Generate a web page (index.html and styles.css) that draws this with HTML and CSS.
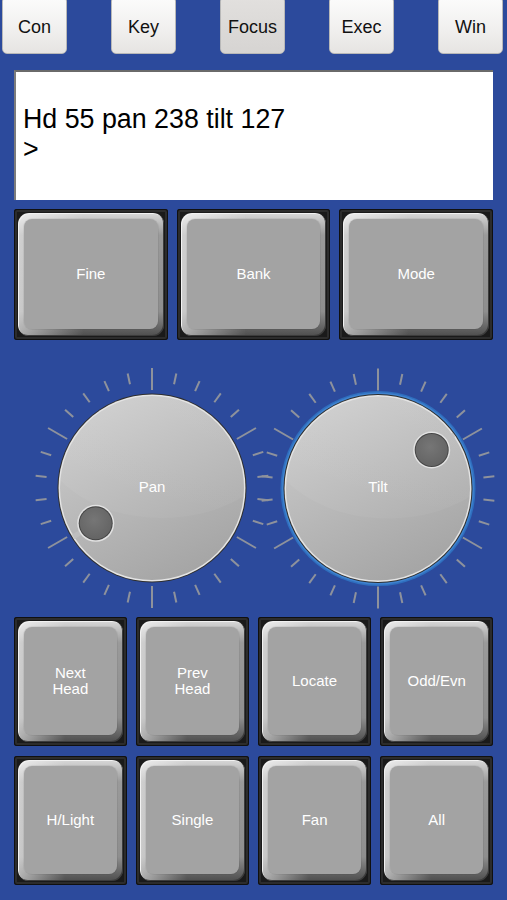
FILE: index.html
```html
<!DOCTYPE html>
<html>
<head>
<meta charset="utf-8">
<title>Focus</title>
<link rel="stylesheet" href="styles.css">
</head>
<body>
<div class="app">
  <nav class="tabs">
    <div class="tab">Con</div>
    <div class="tab">Key</div>
    <div class="tab tab-active">Focus</div>
    <div class="tab">Exec</div>
    <div class="tab">Win</div>
  </nav>

  <div class="display">
    <div class="display-line">Hd 55 pan 238 tilt 127</div>
    <div class="display-line">&gt;</div>
  </div>

  <div class="pads pads-3">
    <div class="pad"><div class="bevel"><div class="face">Fine</div></div></div>
    <div class="pad"><div class="bevel"><div class="face">Bank</div></div></div>
    <div class="pad"><div class="bevel"><div class="face">Mode</div></div></div>
  </div>

  <div class="knobs">
    <svg class="knob-canvas" width="507" height="277" viewBox="0 0 507 277">
      <defs>
        <g id="scale" stroke="#8e929c" stroke-width="2" stroke-linecap="butt">
          <line x1="0" y1="-98" x2="0" y2="-120" transform="rotate(0)"/>
          <line x1="0" y1="-106" x2="0" y2="-117" transform="rotate(12)"/>
          <line x1="0" y1="-106" x2="0" y2="-117" transform="rotate(24)"/>
          <line x1="0" y1="-106" x2="0" y2="-117" transform="rotate(36)"/>
          <line x1="0" y1="-106" x2="0" y2="-117" transform="rotate(48)"/>
          <line x1="0" y1="-98" x2="0" y2="-120" transform="rotate(60)"/>
          <line x1="0" y1="-106" x2="0" y2="-117" transform="rotate(72)"/>
          <line x1="0" y1="-106" x2="0" y2="-117" transform="rotate(84)"/>
          <line x1="0" y1="-106" x2="0" y2="-117" transform="rotate(96)"/>
          <line x1="0" y1="-106" x2="0" y2="-117" transform="rotate(108)"/>
          <line x1="0" y1="-98" x2="0" y2="-120" transform="rotate(120)"/>
          <line x1="0" y1="-106" x2="0" y2="-117" transform="rotate(132)"/>
          <line x1="0" y1="-106" x2="0" y2="-117" transform="rotate(144)"/>
          <line x1="0" y1="-106" x2="0" y2="-117" transform="rotate(156)"/>
          <line x1="0" y1="-106" x2="0" y2="-117" transform="rotate(168)"/>
          <line x1="0" y1="-98" x2="0" y2="-120" transform="rotate(180)"/>
          <line x1="0" y1="-106" x2="0" y2="-117" transform="rotate(192)"/>
          <line x1="0" y1="-106" x2="0" y2="-117" transform="rotate(204)"/>
          <line x1="0" y1="-106" x2="0" y2="-117" transform="rotate(216)"/>
          <line x1="0" y1="-106" x2="0" y2="-117" transform="rotate(228)"/>
          <line x1="0" y1="-98" x2="0" y2="-120" transform="rotate(240)"/>
          <line x1="0" y1="-106" x2="0" y2="-117" transform="rotate(252)"/>
          <line x1="0" y1="-106" x2="0" y2="-117" transform="rotate(264)"/>
          <line x1="0" y1="-106" x2="0" y2="-117" transform="rotate(276)"/>
          <line x1="0" y1="-106" x2="0" y2="-117" transform="rotate(288)"/>
          <line x1="0" y1="-98" x2="0" y2="-120" transform="rotate(300)"/>
          <line x1="0" y1="-106" x2="0" y2="-117" transform="rotate(312)"/>
          <line x1="0" y1="-106" x2="0" y2="-117" transform="rotate(324)"/>
          <line x1="0" y1="-106" x2="0" y2="-117" transform="rotate(336)"/>
          <line x1="0" y1="-106" x2="0" y2="-117" transform="rotate(348)"/>
        </g>
        <clipPath id="faceClip">
          <circle r="92"/>
        </clipPath>
        <linearGradient id="faceFill" x1="0.2" y1="0" x2="0.7" y2="1">
          <stop offset="0" stop-color="#cdcdcd"/>
          <stop offset="1" stop-color="#a4a4a4"/>
        </linearGradient>
        <linearGradient id="sheen" x1="0" y1="0" x2="0" y2="1">
          <stop offset="0" stop-color="#ffffff" stop-opacity="0.10"/>
          <stop offset="1" stop-color="#ffffff" stop-opacity="0.04"/>
        </linearGradient>
        <radialGradient id="dotFill" cx="0.45" cy="0.4" r="0.6">
          <stop offset="0" stop-color="#767676"/>
          <stop offset="1" stop-color="#646464"/>
        </radialGradient>
      </defs>

      <!-- scales -->
      <use href="#scale" transform="translate(152 148)"/>
      <use href="#scale" transform="translate(378 148.5)"/>

      <!-- Pan knob -->
      <g transform="translate(152 148)">
        <circle r="94.5" fill="#2e2e2e"/>
        <circle r="93.5" fill="#e4e4e4"/>
        <circle r="92" fill="url(#faceFill)"/>
        <g clip-path="url(#faceClip)">
          <ellipse cx="10" cy="-60" rx="125" ry="90" fill="url(#sheen)"/>
        </g>
        <line x1="-56" y1="35" x2="-79" y2="49" stroke="#c0c0c0" stroke-width="5" opacity="0.8"/>
        <circle cx="-56.3" cy="35.3" r="18.5" fill="#e2e2e2"/>
        <circle cx="-56.3" cy="35.3" r="17" fill="#454545"/>
        <circle cx="-56.3" cy="35.3" r="16" fill="url(#dotFill)"/>
        <text class="knob-label" x="0" y="3.7" text-anchor="middle">Pan</text>
      </g>

      <!-- Tilt knob (selected) -->
      <g transform="translate(378 148.5)">
        <circle r="97.5" fill="#2f6fbf"/>
        <circle r="96" fill="#3f82cf"/>
        <circle r="94.5" fill="#2e2e2e"/>
        <circle r="93.5" fill="#e4e4e4"/>
        <circle r="92" fill="url(#faceFill)"/>
        <g clip-path="url(#faceClip)">
          <ellipse cx="10" cy="-60" rx="125" ry="90" fill="url(#sheen)"/>
        </g>
        <line x1="54" y1="-38.5" x2="76" y2="-54" stroke="#c0c0c0" stroke-width="5" opacity="0.8"/>
        <circle cx="53.7" cy="-38.5" r="18.5" fill="#e2e2e2"/>
        <circle cx="53.7" cy="-38.5" r="17" fill="#454545"/>
        <circle cx="53.7" cy="-38.5" r="16" fill="url(#dotFill)"/>
        <text class="knob-label" x="0" y="3.2" text-anchor="middle">Tilt</text>
      </g>
    </svg>
  </div>

  <div class="pads pads-4">
    <div class="pad"><div class="bevel"><div class="face">Next<br>Head</div></div></div>
    <div class="pad"><div class="bevel"><div class="face">Prev<br>Head</div></div></div>
    <div class="pad"><div class="bevel"><div class="face">Locate</div></div></div>
    <div class="pad"><div class="bevel"><div class="face">Odd/Evn</div></div></div>
    <div class="pad"><div class="bevel"><div class="face">H/Light</div></div></div>
    <div class="pad"><div class="bevel"><div class="face">Single</div></div></div>
    <div class="pad"><div class="bevel"><div class="face">Fan</div></div></div>
    <div class="pad"><div class="bevel"><div class="face">All</div></div></div>
  </div>
</div>
</body>
</html>
```

FILE: styles.css
```css
html, body {
  margin: 0;
  padding: 0;
}

body {
  background: #2c4a9c;
  font-family: "Liberation Sans", Arial, sans-serif;
  width: 507px;
  height: 900px;
  overflow: hidden;
}

.app {
  display: flex;
  flex-direction: column;
}

/* top tab buttons */
.tabs {
  display: flex;
  justify-content: space-between;
  padding: 0 4px 0 2px;
  margin-top: -4px;
  height: 58px;
}

.tab {
  width: 65px;
  height: 58px;
  box-sizing: border-box;
  border: 1px solid #b8b8b8;
  border-radius: 5px;
  background: linear-gradient(#fcfcfc, #f0efee 60%, #e6e4e2);
  color: #111;
  font-size: 18px;
  display: flex;
  align-items: center;
  justify-content: center;
  padding-top: 4px;
}

.tab-active {
  background: linear-gradient(#e2e0de, #d6d4d2);
}

/* command line display */
.display {
  margin: 16px 14px 0 14px;
  height: 130px;
  box-sizing: border-box;
  background: #fff;
  border-top: 2px solid #6a6a6a;
  border-left: 2px solid #7c7c7c;
  padding: 32px 0 0 7px;
  font-size: 26.8px;
  line-height: 30px;
  color: #000;
}

/* hardware style pads */
.pads {
  display: grid;
  margin: 0 14px;
}

.pads-3 {
  margin-top: 9px;
  grid-template-columns: repeat(3, 1fr);
  grid-auto-rows: 131px;
  column-gap: 9px;
}

.pads-4 {
  grid-template-columns: repeat(4, 1fr);
  grid-auto-rows: 129px;
  column-gap: 9.5px;
  row-gap: 10px;
}

.pad {
  background: #1a1a1a;
  border-radius: 3px;
  padding: 4px;
  box-shadow: inset 0 0 0 1px #101010, inset 0 0 0 3px #2c2c2c;
  display: flex;
}

.bevel {
  flex: 1;
  display: flex;
  border-radius: 11px;
  padding: 6px 6px 7px 6px;
  background:
    linear-gradient(to right, rgba(255,255,255,0.55), rgba(255,255,255,0) 45%),
    linear-gradient(to bottom, #d8d8d8 0%, #9a9a9a 18%, #8e8e8e 80%, #4e4e4e 100%);
  box-shadow: inset 1px 1px 0 #f2f2f2, inset -1px -1px 0 #3c3c3c;
}

.face {
  flex: 1;
  border-radius: 8px;
  background: #a3a3a3;
  color: #fff;
  font-size: 15px;
  line-height: 16.5px;
  text-align: center;
  display: flex;
  align-items: center;
  justify-content: center;
  box-shadow: 0 0 0 1px rgba(0,0,0,0.05);
}

/* knob area */
.knobs {
  height: 277px;
}

.knob-canvas {
  display: block;
  overflow: visible;
}

.knob-label {
  font-family: "Liberation Sans", Arial, sans-serif;
  font-size: 15px;
  fill: #fff;
}
```
